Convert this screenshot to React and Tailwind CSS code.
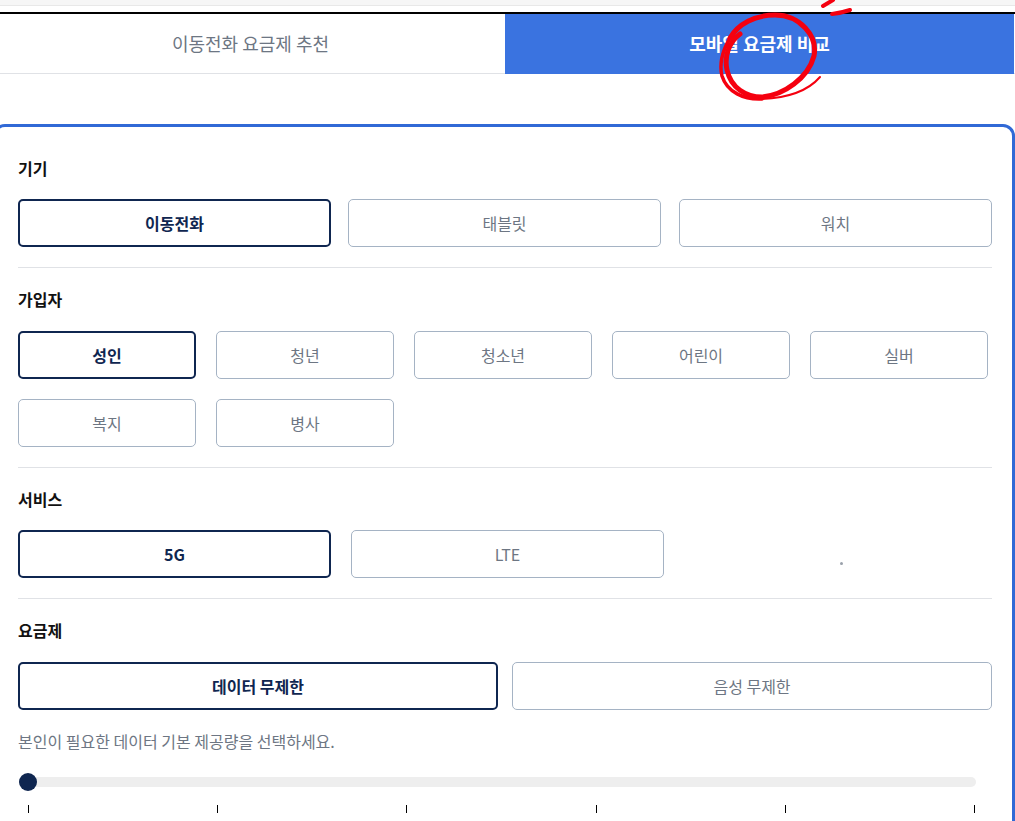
import React from "react";

const font = "font-['Noto_Sans_CJK_KR','Noto_Sans',sans-serif]";

const Option = ({ label, active, className = "" }) => (
  <div
    className={`h-12 flex items-center justify-center rounded-[5px] text-base ${
      active
        ? "border-2 border-[#0f2650] font-bold text-[#0f2650]"
        : "border border-[#a5b3c4] text-[#6d7683]"
    } ${className}`}
  >
    {label}
  </div>
);

const Scribble = () => (
  <svg
    className="absolute left-[700px] top-0 pointer-events-none"
    width="170"
    height="110"
    viewBox="0 0 170 110"
    fill="none"
    stroke="#f5000f"
    strokeLinecap="round"
  >
    <path d="M123 6 L133 0" strokeWidth="4" />
    <path d="M132 14 Q141 13 150 10" strokeWidth="4" />
    <path
      d="M40 34 C29 42 24 56 27 70 C31 88 46 97 62 97 C84 95 108 78 114 56 C118 36 100 15 75 15 C55 15 38 24 30 38"
      strokeWidth="5"
    />
    <path d="M30 38 C23 50 19 64 22 76 C27 92 44 100 62 99" strokeWidth="3.5" />
    <path d="M62 99 C85 98 107 92 120 77" strokeWidth="2" />
  </svg>
);

export default function App() {
  const ticks = [0, 1, 2, 3, 4, 5];
  return (
    <div className={`${font} relative w-[1015px] h-[821px] overflow-hidden bg-white`}>
      <div className="h-[6px] bg-[#f6f6f6] border-b border-[#e8e8e8]" />
      <div className="h-[6px]" />
      <div className="h-[2px] bg-black" />

      <div className="flex h-[60px] border-b border-[#e0e2e6]">
        <div className="w-[505px] pr-1 pb-[2px] flex items-center justify-center text-lg text-[#6d7683]">
          이동전화 요금제 추천
        </div>
        <div className="w-[509px] h-[60px] pb-[2px] bg-[#3a73e0] flex items-center justify-center text-lg font-bold text-white">
          모바일 요금제 비교
        </div>
      </div>

      <div className="mt-[50px] -ml-[7px] w-[1022px] h-[800px] border-[3px] border-[#3169d6] rounded-[12px] pt-[30px] pl-[22px] pr-[20px]">
        <div className="text-base font-bold leading-[22px] text-[#111]">기기</div>
        <div className="mt-5 flex">
          <Option label="이동전화" active className="w-[313px]" />
          <Option label="태블릿" className="w-[313px] ml-[17px]" />
          <Option label="워치" className="w-[313px] ml-[18px]" />
        </div>
        <div className="mt-5 h-px bg-[#e0e2e6]" />

        <div className="mt-5 text-base font-bold leading-[22px] text-[#111]">가입자</div>
        <div className="mt-[21px] grid grid-cols-[repeat(5,178px)] gap-5">
          <Option label="성인" active />
          <Option label="청년" />
          <Option label="청소년" />
          <Option label="어린이" />
          <Option label="실버" />
          <Option label="복지" />
          <Option label="병사" />
        </div>
        <div className="mt-5 h-px bg-[#e0e2e6]" />

        <div className="mt-5 text-base font-bold leading-[22px] text-[#111]">서비스</div>
        <div className="mt-5 flex gap-5 items-center">
          <Option label="5G" active className="w-[313px]" />
          <Option label="LTE" className="w-[313px]" />
          <div className="ml-[156px] mt-[18px] w-[3px] h-[3px] rounded-full bg-[#9aa1ab]" />
        </div>
        <div className="mt-5 h-px bg-[#e0e2e6]" />

        <div className="mt-5 text-base font-bold leading-[22px] text-[#111]">요금제</div>
        <div className="mt-[21px] flex gap-[14px]">
          <Option label="데이터 무제한" active className="w-[480px]" />
          <Option label="음성 무제한" className="w-[480px]" />
        </div>

        <div className="mt-5 text-base leading-[22px] text-[#6d7683]">
          본인이 필요한 데이터 기본 제공량을 선택하세요.
        </div>

        <div className="relative mt-[25px] ml-[1px] w-[957px] h-[10px] rounded-full bg-[#eeeeee]">
          <div className="absolute left-0 top-[-4px] w-[18px] h-[18px] rounded-full bg-[#0f2650]" />
        </div>
        <div className="mt-[18px] ml-[10px] w-[947px] flex justify-between">
          {ticks.map((t) => (
            <div key={t} className="w-px h-2 bg-black" />
          ))}
        </div>
      </div>

      <Scribble />
    </div>
  );
}
